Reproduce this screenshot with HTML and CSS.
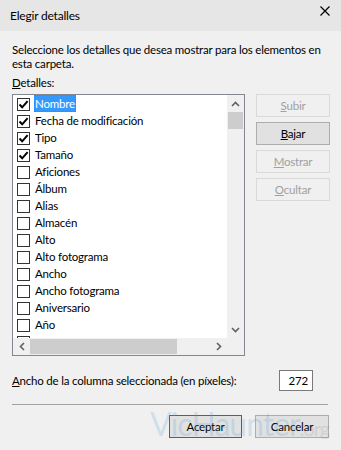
FILE: index.html
```html
<!DOCTYPE html>
<html lang="es">
<head>
<meta charset="utf-8">
<title>Elegir detalles</title>
<link rel="stylesheet" href="styles.css">
</head>
<body>
<div class="window">
  <div class="titlebar">
    <span class="title">Elegir detalles</span>
    <svg class="close" width="10" height="10" viewBox="0 0 10 10"><path d="M0.5 0.5 L9.5 9.5 M9.5 0.5 L0.5 9.5" stroke="#000" stroke-width="1.2" fill="none"/></svg>
  </div>
  <div class="content">
    <p class="desc">Seleccione los detalles que desea mostrar para los elementos en esta carpeta.</p>
    <p class="label"><u>D</u>etalles:</p>
    <div class="main">
      <div class="listbox">
        <div class="rows">
          <div class="row"><span class="cb checked"><svg viewBox="0 0 11 11"><path d="M1.5 5.5 L4.2 8.3 L9.6 2.2" stroke="#000" stroke-width="2" fill="none"/></svg></span><span class="name selected">Nombre</span></div>
          <div class="row"><span class="cb checked"><svg viewBox="0 0 11 11"><path d="M1.5 5.5 L4.2 8.3 L9.6 2.2" stroke="#000" stroke-width="2" fill="none"/></svg></span><span class="name">Fecha de modificación</span></div>
          <div class="row"><span class="cb checked"><svg viewBox="0 0 11 11"><path d="M1.5 5.5 L4.2 8.3 L9.6 2.2" stroke="#000" stroke-width="2" fill="none"/></svg></span><span class="name">Tipo</span></div>
          <div class="row"><span class="cb checked"><svg viewBox="0 0 11 11"><path d="M1.5 5.5 L4.2 8.3 L9.6 2.2" stroke="#000" stroke-width="2" fill="none"/></svg></span><span class="name">Tamaño</span></div>
          <div class="row"><span class="cb"></span><span class="name">Aficiones</span></div>
          <div class="row"><span class="cb"></span><span class="name">Álbum</span></div>
          <div class="row"><span class="cb"></span><span class="name">Alias</span></div>
          <div class="row"><span class="cb"></span><span class="name">Almacén</span></div>
          <div class="row"><span class="cb"></span><span class="name">Alto</span></div>
          <div class="row"><span class="cb"></span><span class="name">Alto fotograma</span></div>
          <div class="row"><span class="cb"></span><span class="name">Ancho</span></div>
          <div class="row"><span class="cb"></span><span class="name">Ancho fotograma</span></div>
          <div class="row"><span class="cb"></span><span class="name">Aniversario</span></div>
          <div class="row"><span class="cb"></span><span class="name">Año</span></div>
          <div class="row"><span class="cb"></span></div>
        </div>
        <div class="vscroll">
          <div class="arrow"><svg width="9" height="6" viewBox="0 0 9 6"><path d="M1 5 L4.5 1.5 L8 5" stroke="#606060" stroke-width="1.6" fill="none"/></svg></div>
          <div class="vthumb"></div>
          <div class="vtrack"></div>
          <div class="arrow"><svg width="9" height="6" viewBox="0 0 9 6"><path d="M1 1 L4.5 4.5 L8 1" stroke="#606060" stroke-width="1.6" fill="none"/></svg></div>
        </div>
        <div class="hscroll">
          <div class="arrow"><svg width="6" height="9" viewBox="0 0 6 9"><path d="M5 1 L1.5 4.5 L5 8" stroke="#606060" stroke-width="1.6" fill="none"/></svg></div>
          <div class="hthumb"></div>
          <div class="htrack"></div>
          <div class="arrow"><svg width="6" height="9" viewBox="0 0 6 9"><path d="M1 1 L4.5 4.5 L1 8" stroke="#606060" stroke-width="1.6" fill="none"/></svg></div>
        </div>
        <div class="corner"></div>
      </div>
      <div class="side">
        <button class="btn disabled"><u>S</u>ubir</button>
        <button class="btn"><u>B</u>ajar</button>
        <button class="btn disabled"><u>M</u>ostrar</button>
        <button class="btn disabled"><u>O</u>cultar</button>
      </div>
    </div>
    <div class="widthrow">
      <span><u>A</u>ncho de la columna seleccionada (en píxeles):</span>
      <span class="input">272</span>
    </div>
    <div class="sep"></div>
    <div class="footer">
      <button class="btn default">Aceptar</button>
      <button class="btn">Cancelar</button>
    </div>
  </div>
  <div class="watermark"><span class="wm-main">VicHaunter</span><span class="wm-org">.org</span></div>
</div>
</body>
</html>
```

FILE: styles.css
```css
html, body {
  margin: 0;
  padding: 0;
}
body {
  background: #f0f0f0;
  font-family: Lato, "Noto Sans", sans-serif;
  font-size: 11.5px;
  letter-spacing: -0.2px;
  color: #000;
}
.window {
  position: relative;
  width: 341px;
  height: 450px;
  overflow: hidden;
  background: #f0f0f0;
}
.titlebar {
  height: 31px;
  background: #e6e6e6;
  display: flex;
  align-items: center;
  justify-content: space-between;
  padding: 0 11px 0 10px;
}
.title {
  font-size: 12px;
}
.close {
  display: block;
  margin-top: -10px;
}
.content {
  padding: 0 0 0 12px;
}
.desc {
  margin: 12px 0 0;
  width: 318px;
  line-height: 14px;
}
.label {
  margin: 4px 0 0;
  line-height: 15px;
}
.main {
  display: flex;
  margin-top: 4px;
}
.listbox {
  width: 231px;
  height: 260px;
  border: 1px solid #828790;
  background: #fff;
  display: grid;
  grid-template-columns: 214px 17px;
  grid-template-rows: 243px 17px;
}
.rows {
  overflow: hidden;
  padding-left: 4px;
}
.row {
  height: 17px;
  display: flex;
  align-items: flex-start;
  white-space: nowrap;
}
.cb {
  width: 11px;
  height: 11px;
  border: 1px solid #333;
  background: #fff;
  margin-top: 3px;
  flex: none;
  display: flex;
}
.cb svg {
  width: 11px;
  height: 11px;
}
.name {
  margin-left: 4px;
  padding: 0 1px;
  height: 17px;
  line-height: 17px;
  box-sizing: border-box;
}
.name.selected {
  background: #3399ff;
  color: #fff;
  outline: 1px dotted #cc6600;
  outline-offset: -1px;
}
.vscroll {
  background: #f0f0f0;
  display: flex;
  flex-direction: column;
}
.arrow {
  flex: none;
  width: 17px;
  height: 17px;
  display: flex;
  align-items: center;
  justify-content: center;
}
.vthumb {
  height: 17px;
  margin: 0 1px;
  background: #cdcdcd;
  flex: none;
}
.vtrack {
  flex: 1;
}
.hscroll {
  background: #f0f0f0;
  display: flex;
}
.hthumb {
  width: 147px;
  margin: 1px 0;
  background: #cdcdcd;
  flex: none;
}
.htrack {
  flex: 1;
}
.corner {
  background: #f0f0f0;
}
.side {
  margin-left: 11px;
  display: flex;
  flex-direction: column;
  gap: 5px;
}
.btn {
  font: inherit;
  letter-spacing: inherit;
  width: 74px;
  height: 23px;
  padding: 0;
  border: 1px solid #adadad;
  background: #e1e1e1;
  color: #000;
  line-height: 19px;
}
.btn.disabled {
  border-color: #d9d9d9;
  background: #f0f0f0;
  color: #a0a0a0;
}
.btn.default {
  border-color: #0078d7;
  width: 73px;
}
.widthrow {
  display: flex;
  align-items: center;
  justify-content: space-between;
  margin-top: 14px;
  width: 301px;
}
.input {
  width: 28px;
  height: 19px;
  padding-right: 4px;
  border: 1px solid #7a7a7a;
  background: #fff;
  text-align: right;
  line-height: 19px;
}
.sep {
  margin-top: 13px;
  width: 316px;
  height: 1px;
  background: #a0a0a0;
}
.footer {
  display: flex;
  justify-content: flex-end;
  gap: 13px;
  margin-top: 10px;
  width: 317px;
}
.watermark {
  position: absolute;
  left: 150px;
  top: 404px;
  white-space: nowrap;
  pointer-events: none;
  font-family: Lato, sans-serif;
  letter-spacing: -1px;
  line-height: 40px;
}
.wm-main {
  font-size: 32px;
  color: rgba(90, 160, 220, 0.22);
}
.wm-org {
  font-size: 20px;
  color: rgba(120, 120, 120, 0.18);
}
```
